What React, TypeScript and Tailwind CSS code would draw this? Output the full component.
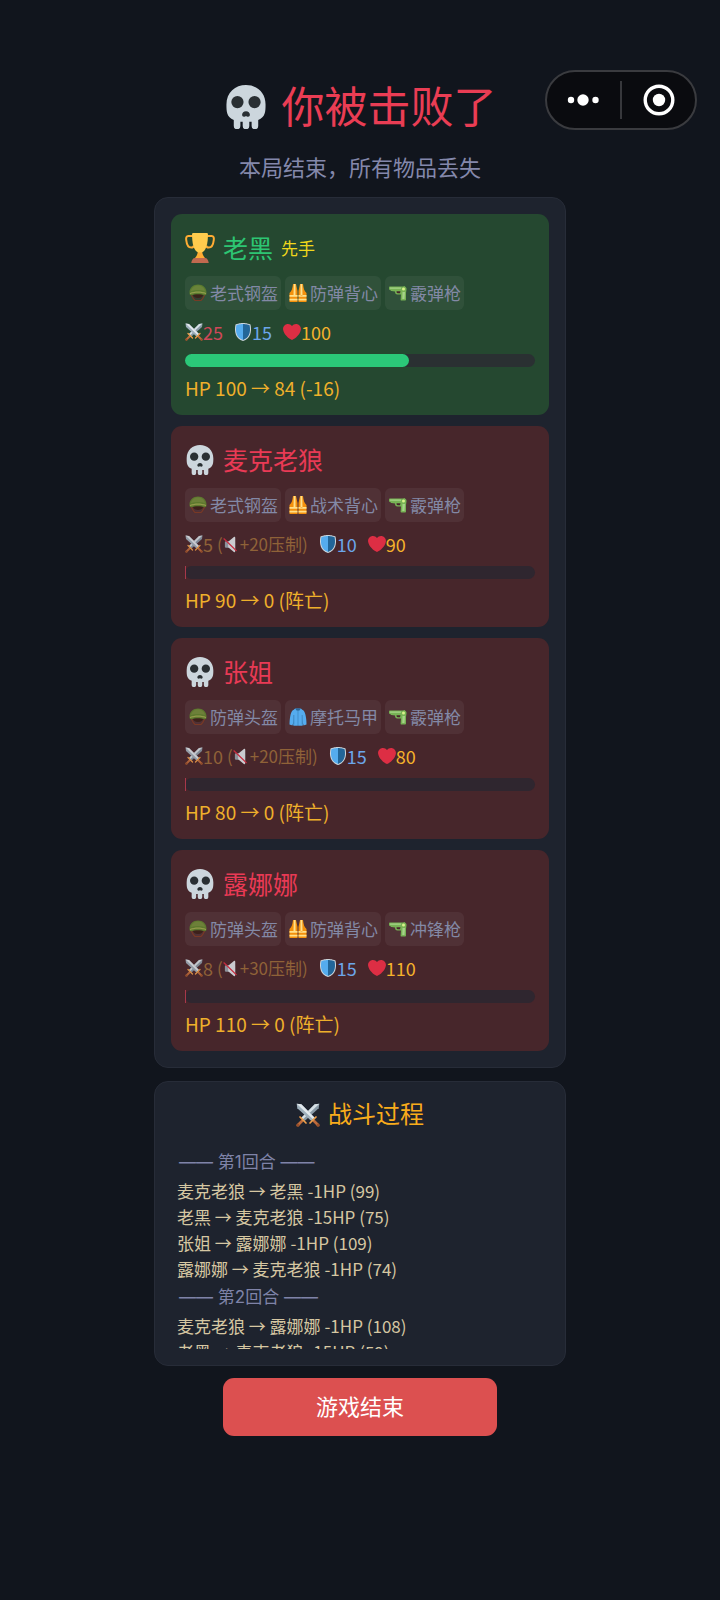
import type { ReactNode } from "react";

type IconProps = { className?: string };

function Svg({ className = "size-[18px]", children }: { className?: string; children: ReactNode }) {
  return (
    <svg viewBox="0 0 36 36" aria-hidden="true" className={`shrink-0 ${className}`}>
      {children}
    </svg>
  );
}

function Skull({ className }: IconProps) {
  return (
    <Svg className={className}>
      <path
        fill="#CCD6DD"
        d="M34 16C34 6 26.8 0 18 0S2 6 2 16c0 5.600.100 10.400 6 12.640V33.500a2.500 2.500 0 0 0 5.400 0v-3.500h1.900v3.500a2.500 2.500 0 0 0 5.400 0v-3.500h1.900v3.500a2.500 2.500 0 0 0 5.400 0v-4.860C33.900 26.400 34 21.600 34 16z"
      />
      <circle cx="11" cy="14" r="5" fill="#292F33" />
      <circle cx="25" cy="14" r="5" fill="#292F33" />
      <path
        fill="#292F33"
        d="M18 21.500c-1.900 0-3.200 1.300-3.200 2.900 0 1 .600 1.600 1.500 1.600.700 0 1.100-.500 1.700-.500s1 .500 1.700.500c.900 0 1.500-.600 1.500-1.600 0-1.600-1.300-2.900-3.200-2.900z"
      />
    </Svg>
  );
}

function Trophy({ className }: IconProps) {
  return (
    <Svg className={className}>
      <path
        fill="none"
        stroke="#FFAC33"
        strokeWidth="2.4"
        d="M9.500 3.500H4c-2.300 0-2.900 2-2.500 5 .500 4.500 2 9 6 9 2 0 3-1 3-2.500M26.500 3.500H32c2.300 0 2.900 2 2.500 5-.500 4.500-2 9-6 9-2 0-3-1-3-2.500"
      />
      <path fill="#FFAC33" d="M15.500 20h5c0 4 .600 6.500 3.500 10H12c2.900-3.500 3.500-6 3.500-10z" />
      <path fill="#FFCC4D" d="M8.500 1.500C8.500.700 9.200 0 10 0h16c.800 0 1.500.700 1.500 1.500 0 10-1.500 22-9.500 22s-9.500-12-9.500-22z" />
      <path fill="#C1694F" d="M12 30h12c2.500 0 4 2.500 4.500 6h-21c.500-3.500 2-6 4.500-6z" />
    </Svg>
  );
}

function Helmet({ className, shaded }: IconProps & { shaded?: boolean }) {
  return (
    <Svg className={className}>
      {shaded && <path fill="#343f30" d="M7 20h22c0 8-5 13-11 14-6-1-11-6-11-14z" />}
      <path fill="none" stroke="#7E3A24" strokeWidth="2.4" strokeLinejoin="round" d="M4 20c2 4 4 10 8 13h12c4-3 6-9 8-13" />
      <path fill="#3B1F18" d="M7 19h22c-1 6-5 9-11 9S8 25 7 19z" />
      <path fill="#5F802E" d="M18 1C8 1 1 8 1 17c-.400 3 1 6 3.500 5.500 7-3 20-3 27 0C34 23 35.400 20 35 17 35 8 28 1 18 1z" />
      <path fill="#71893A" d="M18 3C10 3 5 8 4 14c9-2.500 19-2.500 28 0C31 8 26 3 18 3z" />
      <path fill="#9BA64E" d="M2 18c9-4 23-4 32 0v2.500c-9-4-23-4-32 0z" />
    </Svg>
  );
}

function Vest({ className }: IconProps) {
  return (
    <Svg className={className}>
      <path fill="#F4900C" d="M8 0h6l3 14v22H1V18c4-3 6-9 7-18zM28 0h-6l-3 14v22h16V18c-4-3-6-9-7-18z" />
      <path fill="#FFE08A" d="M9.500 0h3.500v23H9zM26.500 0H23v23h4zM1 22h16v3.500H1zM19 22h16v3.500H19zM1 29.500h16V33H1zM19 29.500h16V33H19z" />
    </Svg>
  );
}

function Jacket({ className }: IconProps) {
  return (
    <Svg className={className}>
      <path fill="#4A9BDA" d="M12 1h12l4 6v28H8V7z" />
      <path fill="#55ACEE" d="M12 2 7 5C3 9 1 22 1 33l6 2 3-13v13h7.500V5zM24 2l5 3c4 4 6 17 6 28l-6 2-3-13v13h-7.500V5z" />
      <path fill="#2A6797" d="M13 1h10l-2 4h-6zM9.300 14h1v19h-1zM25.700 14h1v19h-1zM17.700 5h.6v30h-.6z" />
    </Svg>
  );
}

function Pistol({ className }: IconProps) {
  return (
    <Svg className={className}>
      <path fill="#77B255" d="M0 7c0-1 1-2 2-2h26l3-1 2 2c1.500 1 2.500 3 2 5l-1 7v13c0 1-1 2-2 2h-7c-1.500 0-2-1-1.800-2L24 21h-7c-3.500 0-5-2-5-6l-7-1c-1.500 0-2-1-2-2-2 0-3-1-3-2.500z" />
      <path fill="#47262b" d="M15 14.500h8l-1 4h-4.500c-2 0-2.500-2-2.500-4z" />
      <path fill="#A6D388" d="M2 7h22v2.500H2zM27 16h5l-1 14h-4.500z" />
      <circle cx="29" cy="10" r="3" fill="#D9F28B" />
    </Svg>
  );
}

function Swords({ className }: IconProps) {
  return (
    <Svg className={className}>
      <path fill="#8899A6" d="m35 1-7 1L8 22l5 5L34 8z" />
      <path fill="#D6E0E6" d="m35 1-7 1L8 22l2.500 2.500z" />
      <path fill="#9FB0BC" d="m1 1 7 1 20 20-5 5L2 8z" />
      <path fill="#E1E8ED" d="m1 1 7 1 20 20-2.500 2.500z" />
      <path
        fill="none"
        stroke="#BE6B3C"
        strokeWidth="4"
        strokeLinecap="round"
        d="m27 27 6 6M9 27l-6 6"
      />
      <path fill="none" stroke="#F0A04B" strokeWidth="2.6" strokeLinecap="round" d="m21 30 9-9M15 30l-9-9" />
      <circle cx="33.200" cy="33.200" r="2.400" fill="#99502B" />
      <circle cx="2.800" cy="33.200" r="2.400" fill="#99502B" />
    </Svg>
  );
}

function Shield({ className }: IconProps) {
  return (
    <Svg className={className}>
      <path fill="#CCD6DD" d="M33 3c-7-3-15-3-15-3S10 0 3 3C0 18 3 31 18 36c15-5 18-18 15-33z" />
      <path fill="#55ACEE" d="M18 33.884C6.412 29.729 1.961 19.831 4.760 4.444 11.063 2.029 17.928 2 18 2z" />
      <path fill="#226699" d="M31.240 4.443C24.441 2.041 18.138 2.001 18 2v31.884c11.588-4.155 16.039-14.053 13.240-29.441z" />
    </Svg>
  );
}

function Heart({ className }: IconProps) {
  return (
    <Svg className={className}>
      <path
        fill="#DD2E44"
        d="M35.885 11.833c0-5.450-4.418-9.868-9.867-9.868-3.308 0-6.227 1.633-8.018 4.129-1.791-2.496-4.710-4.129-8.017-4.129-5.450 0-9.868 4.417-9.868 9.868 0 .772.098 1.520.266 2.241C1.751 22.587 11.216 31.568 18 34.034c6.783-2.466 16.249-11.447 17.617-19.959.170-.721.268-1.469.268-2.242z"
      />
    </Svg>
  );
}

function Muted({ className }: IconProps) {
  return (
    <Svg className={className}>
      <path fill="#9AA6B0" d="M7 11h8v14H7c-2 0-3-1-3-3v-8c0-2 1-3 3-3z" />
      <path fill="#E1E8ED" d="M11 12 23 2c2-1 3 0 3 2v28c0 2-1 3-3 2L11 24z" />
      <path stroke="#DD2E44" strokeWidth="2.8" strokeLinecap="round" d="m2 6 26 25" />
    </Svg>
  );
}

type Fighter = {
  name: string;
  first?: boolean;
  alive: boolean;
  helmet: string;
  armor: string;
  jacket?: boolean;
  gun: string;
  attack: number;
  suppressed?: number;
  defense: number;
  health: number;
  bar: number;
  result: string;
};

const fighters: Fighter[] = [
  { name: "老黑", first: true, alive: true, helmet: "老式钢盔", armor: "防弹背心", gun: "霰弹枪", attack: 25, defense: 15, health: 100, bar: 64, result: "HP 100 → 84 (-16)" },
  { name: "麦克老狼", alive: false, helmet: "老式钢盔", armor: "战术背心", gun: "霰弹枪", attack: 5, suppressed: 20, defense: 10, health: 90, bar: 0, result: "HP 90 → 0 (阵亡)" },
  { name: "张姐", alive: false, helmet: "防弹头盔", armor: "摩托马甲", jacket: true, gun: "霰弹枪", attack: 10, suppressed: 20, defense: 15, health: 80, bar: 0, result: "HP 80 → 0 (阵亡)" },
  { name: "露娜娜", alive: false, helmet: "防弹头盔", armor: "防弹背心", gun: "冲锋枪", attack: 8, suppressed: 30, defense: 15, health: 110, bar: 0, result: "HP 110 → 0 (阵亡)" },
];

const rounds = [
  {
    title: "—— 第1回合 ——",
    lines: ["麦克老狼 → 老黑 -1HP (99)", "老黑 → 麦克老狼 -15HP (75)", "张姐 → 露娜娜 -1HP (109)", "露娜娜 → 麦克老狼 -1HP (74)"],
  },
  {
    title: "—— 第2回合 ——",
    lines: ["麦克老狼 → 露娜娜 -1HP (108)", "老黑 → 麦克老狼 -15HP (59)"],
  },
];

function Tag({ icon, children }: { icon: ReactNode; children: ReactNode }) {
  return (
    <li className="flex h-[34px] items-center gap-[3px] rounded-md bg-white/5 pr-[3px] pl-1 text-[17px] text-[#8389a6]">
      {icon}
      {children}
    </li>
  );
}

function FighterCard({ fighter }: { fighter: Fighter }) {
  const { alive } = fighter;
  return (
    <li className={`flex flex-col gap-2 rounded-[11px] p-3.5 ${alive ? "bg-[#254830]" : "bg-[#47262b]"}`}>
      <div className="flex h-10 items-center gap-2">
        {alive ? <Trophy className="size-[30px]" /> : <Skull className="size-[30px]" />}
        <h2 className={`text-[25px] ${alive ? "text-[#2dc573]" : "text-[#e93a55]"}`}>{fighter.name}</h2>
        {fighter.first && <span className="text-[17px] text-[#f0d81c]">先手</span>}
      </div>
      <ul className="flex gap-1">
        <Tag icon={<Helmet shaded={alive} className="size-[18px] opacity-90" />}>{fighter.helmet}</Tag>
        <Tag icon={fighter.jacket ? <Jacket /> : <Vest />}>{fighter.armor}</Tag>
        <Tag icon={<Pistol />}>{fighter.gun}</Tag>
      </ul>
      <div className="flex h-7 items-center gap-[11px] text-[18px]">
        {fighter.suppressed ? (
          <span className="flex items-center text-[#8f6238]">
            <Swords className="size-[18px] opacity-85" />
            {fighter.attack}
            <span className="ml-1 flex items-center text-[17px]">
              (<Muted className="size-[17px] opacity-85" />+{fighter.suppressed}压制)
            </span>
          </span>
        ) : (
          <span className="flex items-center text-[#d0485a]">
            <Swords />
            {fighter.attack}
          </span>
        )}
        <span className="flex items-center text-[#6ca6ea]">
          <Shield />
          {fighter.defense}
        </span>
        <span className="flex items-center text-[#f5b22c]">
          <Heart />
          {fighter.health}
        </span>
      </div>
      <div className={`h-[13px] rounded-full ${alive ? "bg-[#2a3032]" : "bg-[#2f262f]"}`}>
        <div
          className={`h-full ${alive ? "rounded-full bg-[#2bc878]" : "min-w-px bg-[#a8384a]"}`}
          style={{ width: `${fighter.bar}%` }}
        />
      </div>
      <p className="text-[19px] leading-[26px] text-[#efb02b]">{fighter.result}</p>
    </li>
  );
}

export default function App() {
  return (
    <div className="relative min-h-screen bg-[#11151d] font-['Inter','Noto_Sans_CJK_SC',sans-serif] font-normal">
      <div className="absolute top-[70px] right-[23px] flex h-[60px] w-[152px] items-center rounded-full border-2 border-[#3a3b3f] bg-[#0a0b0f]">
        <button type="button" aria-label="更多" className="flex h-full flex-1 items-center justify-center">
          <svg viewBox="0 0 34 12" className="h-3 w-[34px]" fill="#fff">
            <circle cx="4" cy="6" r="3.200" />
            <circle cx="16" cy="6" r="5.700" />
            <circle cx="28.500" cy="6" r="3.200" />
          </svg>
        </button>
        <span className="h-[38px] w-0.5 bg-[#37383c]" />
        <button type="button" aria-label="关闭" className="flex h-full flex-1 items-center justify-center">
          <svg viewBox="0 0 32 32" className="size-8">
            <circle cx="16" cy="16" r="13.800" fill="none" stroke="#fff" strokeWidth="3.400" />
            <circle cx="16" cy="16" r="6.200" fill="#fff" />
          </svg>
        </button>
      </div>

      <main className="mx-auto flex w-full max-w-[412px] flex-col items-center pt-[77px] pb-12">
        <h1 className="flex items-center gap-3.5 text-[43px] leading-[60px] text-[#ea3d54]">
          <Skull className="size-11" />
          你被击败了
        </h1>
        <p className="mt-4 text-[22px] leading-[30px] text-[#8488ab]">本局结束，所有物品丢失</p>

        <ul className="mt-3.5 flex w-full flex-col gap-[11px] rounded-[14px] border border-[#272c38] bg-[#1e232e] p-4 font-['Noto_Sans_CJK_SC',sans-serif]">
          {fighters.map((fighter) => (
            <FighterCard key={fighter.name} fighter={fighter} />
          ))}
        </ul>

        <section className="mt-[13px] w-full rounded-[14px] border border-[#272c38] bg-[#1e232e] p-4">
          <h2 className="flex items-center justify-center gap-2 text-[24px] leading-[34px] text-[#f9ac1b]">
            <Swords className="size-6" />
            战斗过程
          </h2>
          <div className="mt-[15px] h-[202px] overflow-x-hidden overflow-y-auto px-1.5 text-[17px] leading-[26px] text-[#d6c7a2] [scrollbar-width:none]">
            {rounds.map((round) => (
              <div key={round.title}>
                <h3 className="mt-0.5 mb-[3px] px-0.5 text-[#7f83a8]">{round.title}</h3>
                {round.lines.map((line) => (
                  <p key={line} className="font-['Noto_Sans_CJK_SC',sans-serif]">
                    {line}
                  </p>
                ))}
              </div>
            ))}
          </div>
        </section>

        <button type="button" className="mt-3 h-[58px] w-[274px] rounded-[11px] bg-[#dc5050] text-[22px] text-white">
          游戏结束
        </button>
      </main>
    </div>
  );
}
